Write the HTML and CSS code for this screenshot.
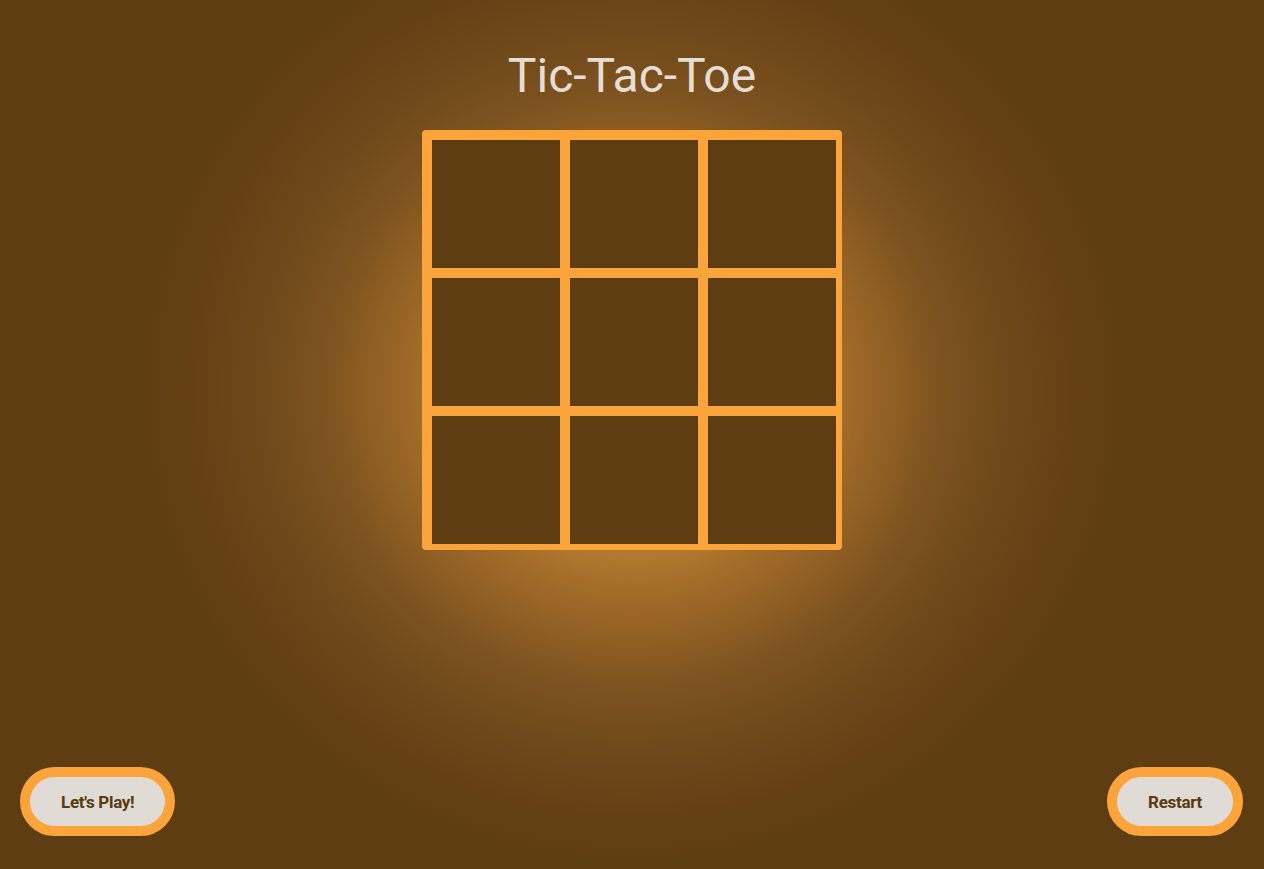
FILE: index.html
```html
<!DOCTYPE html>
<html lang="en">
<head>
<meta charset="utf-8">
<title>Tic-Tac-Toe</title>
<link rel="stylesheet" href="styles.css">
</head>
<body>
<main class="page">
  <h1 class="title">Tic-Tac-Toe</h1>
  <div class="board">
    <div class="cell"></div><div class="cell"></div><div class="cell"></div>
    <div class="cell"></div><div class="cell"></div><div class="cell"></div>
    <div class="cell"></div><div class="cell"></div><div class="cell"></div>
  </div>
  <footer class="controls">
    <button class="btn">Let's Play!</button>
    <button class="btn">Restart</button>
  </footer>
</main>
</body>
</html>
```
FILE: styles.css
```css
html, body {
  margin: 0;
  padding: 0;
  height: 100%;
}
body {
  background-color: #5e3d12;
  background-image: radial-gradient(ellipse 520px 500px at 50% 390px,
    #c88a36 0,
    #b07a30 33%,
    #a06a28 42%,
    #7c521f 60%,
    #6e4819 73%,
    #633f14 87%,
    #5e3d12 100%);
  overflow: hidden;
  font-family: Roboto, "Liberation Sans", sans-serif;
}
.page {
  height: 100vh;
  display: flex;
  flex-direction: column;
  align-items: center;
}
.title {
  margin: 48px 0 0;
  font-family: Roboto, "Liberation Sans", sans-serif;
  font-weight: 400;
  font-size: 48px;
  line-height: 56px;
  color: #e6ddd3;
}
.board {
  margin-top: 26px;
  width: 420px;
  height: 420px;
  box-sizing: border-box;
  padding: 10px 6px 6px 10px;
  display: grid;
  grid-template-columns: repeat(3, 128px);
  grid-template-rows: repeat(3, 128px);
  gap: 10px;
  background: #fba43c;
  border-radius: 4px;
}
.cell {
  background: #5e3d12;
}
.controls {
  margin-top: auto;
  margin-bottom: 33px;
  align-self: stretch;
  display: flex;
  justify-content: space-between;
  padding: 0 21px 0 20px;
}
.btn {
  height: 69px;
  padding: 0 31px;
  border: 10px solid #fba43c;
  border-radius: 35px;
  background: #e0dbd4;
  color: #5a3a10;
  font-family: Roboto, "Liberation Sans", sans-serif;
  font-weight: 700;
  font-size: 17px;
  letter-spacing: -0.3px;
  cursor: pointer;
}
```
